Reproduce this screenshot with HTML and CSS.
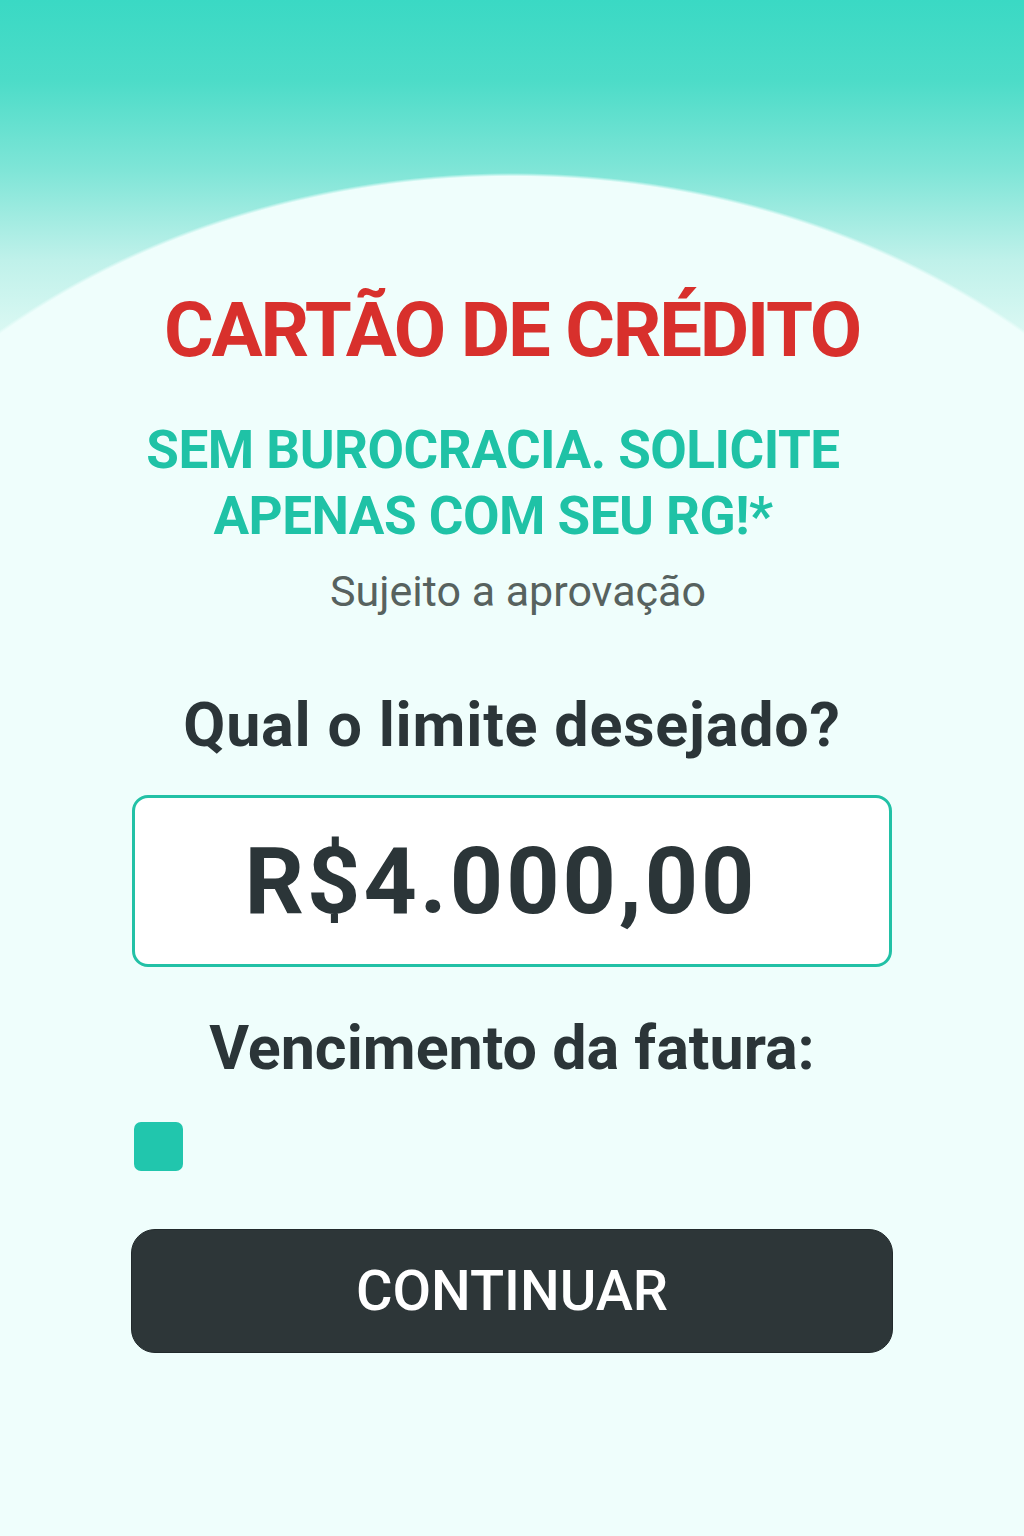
FILE: index.html
```html
<!DOCTYPE html>
<html lang="pt-BR">
<head>
<meta charset="utf-8">
<title>Cartão de Crédito</title>
<link rel="stylesheet" href="styles.css">
</head>
<body>
<main class="page">
  <div class="content">
    <h1 class="title">CARTÃO DE CRÉDITO</h1>
    <p class="subtitle">SEM BUROCRACIA. SOLICITE<br>APENAS COM SEU RG!*</p>
    <p class="note">Sujeito a aprovação</p>
    <h2 class="question">Qual o limite desejado?</h2>
    <div class="amount-box"><span class="amount">R$4.000,00</span></div>
    <h2 class="question due">Vencimento da fatura:</h2>
    <div class="options"><span class="option"></span></div>
    <button class="cta" type="button">CONTINUAR</button>
  </div>
</main>
</body>
</html>
```
FILE: styles.css
```css
* { box-sizing: border-box; }
html, body { margin: 0; padding: 0; }
body {
  width: 1024px;
  min-height: 1536px;
  font-family: Roboto, "Liberation Sans", sans-serif;
  background-color: #effefc;
  background-image:
    radial-gradient(ellipse 800px 677px at 512px 850px, #effefc 99.5%, rgba(239,254,252,0) 100%),
    linear-gradient(180deg, #3ad9c4 0px, #4cdcc8 80px, #7fe5d7 170px, #bff1ea 260px, #ddf9f4 340px, #effefc 440px);
  background-repeat: no-repeat;
}
.page {
  padding-top: 285px;
  min-height: 1536px;
}
.content {
  width: 760px;
  margin: 0 auto;
  display: flex;
  flex-direction: column;
  align-items: center;
  text-align: center;
}
.title {
  margin: 0;
  font-size: 76px;
  line-height: 90px;
  font-weight: 700;
  letter-spacing: -2.2px;
  color: #d8302c;
}
.subtitle {
  margin: 42px 0 0;
  padding-right: 38px;
  font-size: 53px;
  line-height: 66px;
  font-weight: 700;
  letter-spacing: -0.5px;
  color: #1fc2a6;
}
.note {
  margin: 17px 0 0;
  padding-left: 12px;
  font-size: 43px;
  line-height: 50px;
  font-weight: 400;
  color: #57625f;
}
.question {
  margin: 73px 0 0;
  font-size: 61px;
  line-height: 72px;
  font-weight: 700;
  letter-spacing: 0.8px;
  color: #2b3538;
}
.amount-box {
  margin-top: 34px;
  width: 100%;
  height: 172px;
  border: 3px solid #22c1a6;
  border-radius: 16px;
  background: #ffffff;
  display: flex;
  align-items: center;
  justify-content: center;
  padding-right: 22px;
}
.amount {
  font-size: 93px;
  font-weight: 700;
  letter-spacing: 3px;
  color: #2b3538;
}
.question.due {
  margin-top: 45px;
  letter-spacing: 0;
}
.options {
  align-self: stretch;
  display: flex;
  margin-top: 38px;
  padding-left: 2px;
}
.option {
  width: 49px;
  height: 49px;
  border-radius: 7px;
  background: #21c6ad;
}
.cta {
  margin-top: 58px;
  width: 762px;
  height: 124px;
  border: 1px solid #222a2c;
  border-radius: 24px;
  background: #2d3638;
  color: #ffffff;
  font-family: Roboto, "Liberation Sans", sans-serif;
  font-size: 56px;
  font-weight: 500;
}
```
